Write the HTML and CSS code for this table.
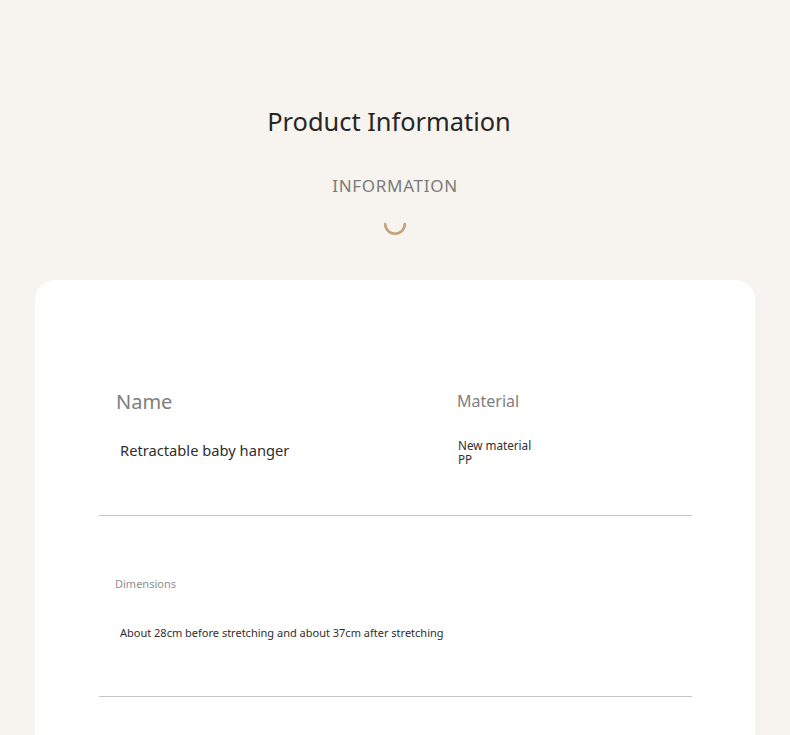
FILE: index.html
```html
<!DOCTYPE html>
<html>
<head>
<meta charset="utf-8">
<link rel="stylesheet" href="styles.css">
</head>
<body>
<div class="page">
  <header class="head">
    <h1 class="title">Product Information</h1>
    <div class="sub">INFORMATION</div>
    <svg class="spin" width="26" height="26" viewBox="0 0 26 26"><path d="M3.2 12 A9.8 9.8 0 0 0 22.8 12" fill="none" stroke="#c4a27b" stroke-width="2.6" stroke-linecap="round"/></svg>
  </header>
  <section class="card">
    <div class="row row1">
      <div class="col col-name">
        <div class="label-lg">Name</div>
        <div class="val-lg">Retractable baby hanger</div>
      </div>
      <div class="col col-mat">
        <div class="label-md">Material</div>
        <div class="val-sm">
          <div class="val-line">New material</div>
          <div class="val-line">PP</div>
        </div>
      </div>
    </div>
    <hr class="rule">
    <div class="row row2">
      <div class="col">
        <div class="label-sm">Dimensions</div>
        <div class="val-md">About 28cm before stretching and about 37cm after stretching</div>
      </div>
    </div>
    <hr class="rule">
  </section>
</div>
</body>
</html>
```
FILE: styles.css
```css
html, body {
  margin: 0;
  padding: 0;
  background: #f7f4ef;
  font-family: "Noto Sans", "Open Sans", sans-serif;
}
.page {
  width: 790px;
  height: 735px;
  overflow: hidden;
}
.head {
  display: flex;
  flex-direction: column;
  align-items: center;
  padding-top: 103px;
}
.title {
  margin: 0 12px 0 0;
  font-weight: 400;
  font-size: 25.4px;
  line-height: 36px;
  color: #262626;
}
.sub {
  margin-top: 35px;
  font-size: 17px;
  line-height: 24px;
  letter-spacing: 0.7px;
  color: #7b7b7b;
}
.spin {
  margin-top: 14px;
  display: block;
}
.card {
  margin: 42px 35px 0;
  background: #fff;
  border-radius: 20px;
  height: 520px;
  padding: 0 63px 0 64px;
}
.row1 {
  display: flex;
  padding-top: 108px;
  height: 127px;
}
.col-name { width: 341px; padding-left: 17px; }
.label-lg { font-size: 20px; line-height: 28px; color: #7e7e7e; }
.val-lg { margin-top: 23px; padding-left: 4px; font-size: 14.7px; line-height: 22px; color: #2e2e2e; }
.label-md { font-size: 16px; line-height: 24px; color: #808080; margin-top: 1px; }
.val-sm { margin-top: 25px; padding-left: 1px; font-size: 11.7px; color: #2e2e2e; }
.val-line { line-height: 14px; }
.rule {
  margin: 0;
  border: 0;
  border-top: 1px solid #c6c6c6;
}
.row2 {
  padding-top: 60px;
  height: 120px;
  padding-left: 16px;
}
.label-sm { font-size: 11px; line-height: 16px; color: #8f8f8f; }
.val-md { margin-top: 32px; padding-left: 5px; font-size: 11px; line-height: 18px; color: #2e2e2e; }
```
